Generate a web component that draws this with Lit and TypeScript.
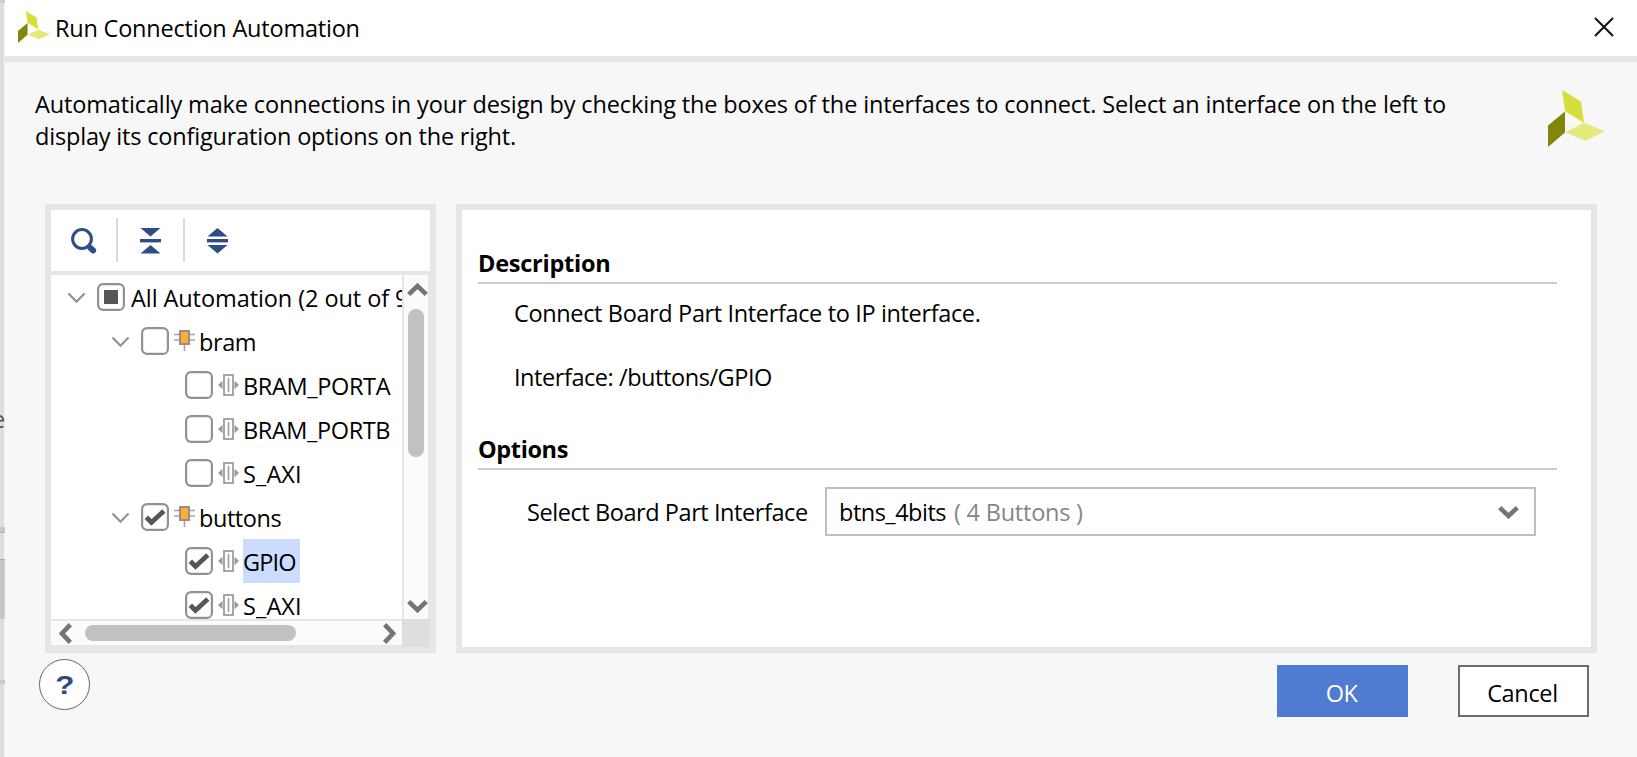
import { LitElement, html, css, svg, nothing } from "lit";
import { customElement, property } from "lit/decorators.js";
import { classMap } from "lit/directives/class-map.js";

type CheckState = "off" | "on" | "mixed";
interface TreeRow {
  label: string;
  level: number;
  state: CheckState;
  icon?: "block" | "port";
  selected?: boolean;
  spacing: number;
}

const ROWS: TreeRow[] = [
  { label: "All Automation (2 out of 9 selected)", level: 0, state: "mixed", spacing: -0.08 },
  { label: "bram", level: 1, state: "off", icon: "block", spacing: -0.4 },
  { label: "BRAM_PORTA", level: 2, state: "off", icon: "port", spacing: -0.35 },
  { label: "BRAM_PORTB", level: 2, state: "off", icon: "port", spacing: -0.39 },
  { label: "S_AXI", level: 2, state: "off", icon: "port", spacing: 0.1 },
  { label: "buttons", level: 1, state: "on", icon: "block", spacing: -0.45 },
  { label: "GPIO", level: 2, state: "on", icon: "port", selected: true, spacing: -0.85 },
  { label: "S_AXI", level: 2, state: "on", icon: "port", spacing: 0.1 },
];

const logo = svg`
  <polygon points="14,0 33,11.5 36,33 17,21" fill="#d5df3b"/>
  <polygon points="0,35.5 17,21.5 17,42.5 0,57" fill="#83860b"/>
  <polygon points="17.3,42.3 36,32.8 56.7,41.3 37.5,50.7" fill="#e3e97b"/>`;

@customElement("tree-row")
class TreeRowElement extends LitElement {
  @property({ attribute: false }) row!: TreeRow;

  static styles = css`
    :host { display: block; height: 44px; }
    .row { display: flex; height: 44px; align-items: center; white-space: nowrap; }
    .l0 { padding-left: 16px; }
    .l1 { padding-left: 60px; }
    .l2 { padding-left: 134px; }
    svg { display: block; flex: none; }
    .chev { margin: 2px 11px 0 0; }
    .icon { margin: 11px 4px 0 5px; align-self: flex-start; }
    .label { line-height: 42px; padding: 2px 4px 0 0; height: 44px; box-sizing: border-box; }
    .l0 .label { margin-left: 6px; }
    .selected { background: #cbdcfe; min-width: 56px; }
  `;

  render() {
    const { label, level, state, icon, selected, spacing } = this.row;
    return html`<div class=${classMap({ row: true, [`l${level}`]: true })}>
      ${level < 2
        ? html`<svg class="chev" width="19" height="13"><path d="M1.5 1.5l8 8.2 8-8.2" fill="none" stroke="#939393" stroke-width="2.3"/></svg>`
        : nothing}
      <svg width="28" height="28">
        <rect x="1.1" y="1.1" width="25.8" height="25.8" rx="5" fill="#fff" stroke="#929292" stroke-width="2.2"/>
        ${state === "mixed" ? svg`<rect x="7" y="7" width="14" height="14" fill="#555756"/>` : nothing}
        ${state === "on" ? svg`<path d="M5.3 14.2l5.2 5.3L22.8 8" fill="none" stroke="#555756" stroke-width="4.8"/>` : nothing}
      </svg>
      ${icon === "block"
        ? html`<svg class="icon block" width="21" height="21"><path d="M0 4.5h21M0 10h21M10.5 12v9" stroke="#a5a5a5" stroke-width="1.6"/><rect x="6" y="1" width="9" height="13" fill="#fbb02d" stroke="#94918c" stroke-width="2"/></svg>`
        : nothing}
      ${icon === "port"
        ? html`<svg class="icon port" width="21" height="22"><path d="M0 11l4.5-4.3v8.6zM21 11l-4.5-4.3v8.6z" fill="#98999c"/><rect x="6" y="1" width="9" height="20" fill="#fff" stroke="#9b9da0" stroke-width="1.8"/><path d="M10.5 4v14" stroke="#9b9da0" stroke-width="1.6"/></svg>`
        : nothing}
      <span class=${classMap({ label: true, selected: !!selected })} style="letter-spacing:${spacing}px">${label}</span>
    </div>`;
  }
}

@customElement("app-root")
class AppRoot extends LitElement {
  static styles = css`
    :host {
      display: flex; width: 100vw; height: 757px; overflow: hidden; color: #000;
      font: 23.5px/32px "Open Sans", "Noto Sans", sans-serif; background: #f7f7f7;
    }
    * { box-sizing: border-box; }
    svg { display: block; flex: none; }
    .strip {
      width: 5px; flex: none; display: flex; flex-direction: column; overflow: hidden;
      background: linear-gradient(90deg, #dedede 0 2px, #cfcfcf 3px, #e9e9e9 3px 4px, #f0f0f0 5px);
      color: #555;
    }
    .top { height: 3px; background: #cdcdcd; }
    .frag { height: 524px; padding-top: 400px; text-indent: -8px; }
    .band { height: 6px; background: #c9c9c9; border-bottom: 1px solid #b2b2b2; }
    .space { height: 26px; }
    .block { height: 60px; border-top: 1px solid #a9a9a9; background: linear-gradient(90deg, #c8c8c8 0 2px, #b8b8b8 3px, #cdcdcd 3px 5px); }
    .low { height: 4px; margin-top: 61px; background: #c9c9c9; }
    .dialog { flex: 1; min-width: 0; display: flex; flex-direction: column; }
    .title {
      height: 62px; flex: none; display: flex; align-items: flex-start; background: #fff;
      border-bottom: 6px solid #e6e6e6; padding: 11px 23px 0 13px;
    }
    .title h1 { flex: 1; margin: 1px 0 0 5px; font: inherit; letter-spacing: -0.21px; }
    .close { margin-top: 6px; }
    .intro { display: flex; justify-content: space-between; height: 142px; padding: 26px 32px 0 30px; }
    .intro p { margin: 0; letter-spacing: -0.135px; white-space: nowrap; }
    .intro .second { letter-spacing: -0.18px; }
    .intro svg { margin-top: 2px; }
    .panels { display: flex; gap: 20px; padding: 0 40px; height: 449px; }
    .left { width: 391px; flex: none; border: 6px solid #e6e6e6; display: flex; flex-direction: column; background: #fff; }
    .toolbar { height: 65px; flex: none; border-bottom: 4px solid #e6e6e6; display: flex; align-items: flex-start; padding: 8px 0 0 20px; }
    .toolbar svg { margin-top: 10px; }
    .sep { width: 2px; height: 44px; background: #dadada; }
    .s1 { margin: 0 22px 0 19px; }
    .s2 { margin: 0 22px 0 22px; }
    .tree { display: grid; grid-template: 344px 28px / 351px 28px; background: #e6e6e6; }
    .view { overflow: hidden; background: #fff; }
    .vbar { width: 26px; border-left: 2px solid #e6e6e6; background: #fbfbfb; display: flex; flex-direction: column; align-items: flex-start; padding: 8px 0 6px 3px; }
    .vthumb { width: 16px; height: 148px; margin: 13px 0 auto 1px; border-radius: 8px; background: #c1c1c1; }
    .hbar { height: 26px; border-top: 2px solid #e6e6e6; background: #fbfbfb; display: flex; align-items: center; padding: 1px 6px 0 8px; }
    .hthumb { width: 211px; height: 16px; margin: 0 auto 1px 13px; border-radius: 8px; background: #c1c1c1; }
    .corner { background: #dedede; }
    .right { flex: 1; border: 6px solid #e6e6e6; background: #fff; padding: 37px 34px 0 16px; }
    h2 { font: 700 23.5px/32px "Open Sans", "Noto Sans", sans-serif; margin: 0; height: 37px; border-bottom: 2px solid #cdcdcd; letter-spacing: -0.25px; }
    .text { margin: 13px 0 0 36px; letter-spacing: -0.36px; }
    .iface { margin: 32px 0 40px 36px; letter-spacing: -0.44px; }
    .opt { letter-spacing: -0.38px; }
    .field { display: flex; align-items: center; margin: 17px 21px 0 49px; }
    .field label { width: 298px; letter-spacing: -0.43px; white-space: nowrap; padding-top: 1px; }
    .combo { flex: 1; height: 49px; border: 2px solid #bfbfbf; display: flex; align-items: center; padding: 1px 15px 0 12px; }
    .combo svg { margin-top: 1px; }
    .value { letter-spacing: -0.5px; }
    .hint { color: #868686; letter-spacing: -0.22px; margin: 0 auto 0 8px; }
    .footer { display: flex; padding: 6px 48px 0 34px; }
    .help { width: 51px; height: 51px; border: 1px solid #666; border-radius: 50%; background: #fff; display: grid; place-items: center; margin-right: auto; }
    .q { font: 700 25px/28px "Liberation Sans", sans-serif; color: #2f4b84; transform: scaleX(1.25); padding-left: 1px; }
    .btn { width: 131px; height: 52px; margin-top: 6px; display: grid; place-items: center; padding: 3px 2px 0 0; letter-spacing: -0.32px; }
    .ok { background: #4f7bd0; color: #fff; margin-right: 50px; letter-spacing: -0.7px; }
    .cancel { border: 2px solid #6c6c6c; background: #fff; }
  `;

  private arrow(d: string, w: number, h: number) {
    return html`<svg width=${w} height=${h}><path d=${d} fill="none" stroke="#757575" stroke-width="4.6"/></svg>`;
  }

  render() {
    return html`
      <div class="strip">
        <div class="top"></div><div class="frag">e</div><div class="band"></div>
        <div class="space"></div><div class="block"></div><div class="low"></div>
      </div>
      <div class="dialog">
        <header class="title">
          <svg width="32" height="32" viewBox="0 0 57 57" preserveAspectRatio="none">${logo}</svg>
          <h1>Run Connection Automation</h1>
          <svg class="close" width="20" height="20"><path d="M1 1l18 18M19 1L1 19" stroke="#111" stroke-width="2"/></svg>
        </header>
        <section class="intro">
          <div>
            <p>Automatically make connections in your design by checking the boxes of the interfaces to connect. Select an interface on the left to</p>
            <p class="second">display its configuration options on the right.</p>
          </div>
          <svg width="57" height="57">${logo}</svg>
        </section>
        <main class="panels">
          <section class="left">
            <div class="toolbar">
              <svg width="26" height="26"><circle cx="11" cy="11" r="9.4" fill="none" stroke="#2f4d85" stroke-width="3"/><path d="M19.5 20l2.7 2.5" stroke="#2f4d85" stroke-width="5.8" stroke-linecap="round"/></svg>
              <span class="sep s1"></span>
              <svg width="21" height="26"><path d="M0.5 0h20l-10 8.5zM0.5 25.5h20l-10-8.5z" fill="#2f4d85"/><path d="M0 12.7h21" stroke="#2f4d85" stroke-width="3.4"/></svg>
              <span class="sep s2"></span>
              <svg width="21" height="26"><path d="M0.5 8.5h20L10.5 0zM0.5 17h20l-10 8.5z" fill="#2f4d85"/><path d="M0 12.7h21" stroke="#2f4d85" stroke-width="3.4"/></svg>
            </div>
            <div class="tree">
              <div class="view">${ROWS.map((row) => html`<tree-row .row=${row}></tree-row>`)}</div>
              <div class="vbar">
                ${this.arrow("M1.7 11.3L10.5 3l8.8 8.3", 21, 13)}
                <div class="vthumb"></div>
                ${this.arrow("M1.7 1.7l8.8 8.3 8.8-8.3", 21, 13)}
              </div>
              <div class="hbar">
                ${this.arrow("M11.3 1.7L3 10.5l8.3 8.8", 13, 21)}
                <div class="hthumb"></div>
                ${this.arrow("M1.7 1.7l8.3 8.8-8.3 8.8", 13, 21)}
              </div>
              <div class="corner"></div>
            </div>
          </section>
          <section class="right">
            <h2>Description</h2>
            <div class="text">Connect Board Part Interface to IP interface.</div>
            <div class="iface">Interface: /buttons/GPIO</div>
            <h2 class="opt">Options</h2>
            <div class="field">
              <label>Select Board Part Interface</label>
              <div class="combo">
                <span class="value">btns_4bits</span><span class="hint">( 4 Buttons )</span>
                ${this.arrow("M1.7 1.7l8.8 8.3 8.8-8.3", 21, 13)}
              </div>
            </div>
          </section>
        </main>
        <footer class="footer">
          <div class="help"><span class="q">?</span></div>
          <div class="btn ok">OK</div>
          <div class="btn cancel">Cancel</div>
        </footer>
      </div>`;
  }
}
